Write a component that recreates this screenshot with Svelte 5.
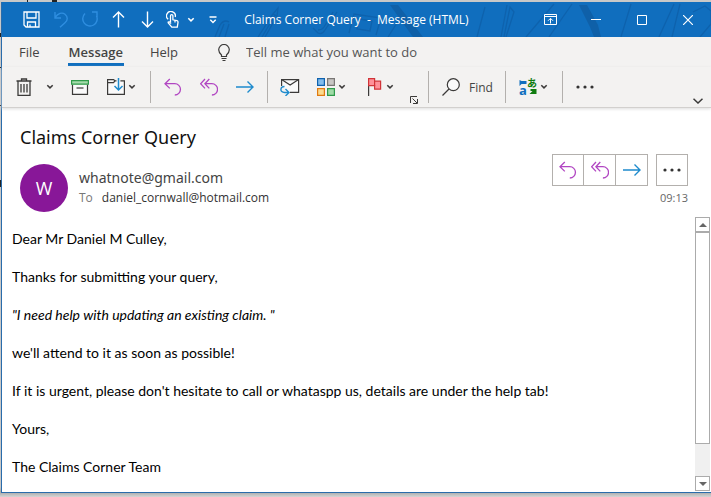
<script>
  let tell = $state('');
  const paragraphs = [
    { text: 'Dear Mr Daniel M Culley,' },
    { text: 'Thanks for submitting your query,' },
    { text: '"I need help with updating an existing claim. "', quote: true },
    { text: "we'll attend to it as soon as possible!" },
    { text: "If it is urgent, please don't hesitate to call or whataspp us, details are under the help tab!" },
    { text: 'Yours,' },
    { text: 'The Claims Corner Team' }
  ];
</script>

{#snippet chev()}
  <svg class="chev" width="8" height="6" viewBox="0 0 8 6"><path d="M1.3 1.2 4 3.9l2.700-2.700" stroke-width="1.500" /></svg>
{/snippet}
{#snippet reply()}
  <svg class="purple" width="18" height="18" viewBox="0 0 18 18"><path d="M5.800 1 1 5.700l4.800 4.700M1 5.700h9.800a5.500 5.500 0 0 1 0 11.300" /></svg>
{/snippet}
{#snippet replyAll()}
  <svg class="purple" width="18" height="18" viewBox="0 0 18 18"><path d="M5 1 .6 5.700 5 10.400M9.300 1 4.900 5.700l4.400 4.700M4.900 5.700h7a5.500 5.500 0 0 1 0 11.300" /></svg>
{/snippet}
{#snippet forward()}
  <svg class="azure" width="18" height="18" viewBox="0 0 18 18"><path d="M0 9h17M11.500 3.500 17 9l-5.500 5.500" /></svg>
{/snippet}
{#snippet dots()}
  <svg width="18" height="4" viewBox="0 0 18 4"><g fill="#333" stroke="none"><circle cx="2" cy="2" r="1.600" /><circle cx="9" cy="2" r="1.600" /><circle cx="16" cy="2" r="1.600" /></g></svg>
{/snippet}

<div class="desktop">
  <main class="window">
    <header class="titlebar">
      <svg class="art" width="560" height="35" viewBox="0 0 560 35">
        <g class="lines">
          <path d="M64 35l5-12q4-6 9-3M68 35l5-13M74 35l4-13" />
          <path d="M107 35l15-23 5-6-1 8-12 21M111 35l13-22M122 12l4 2" />
          <path d="M162 26l5 5q4 2 7-3l12-18M167 28q4 0 6-3l9-15M198 31l5-19 27 4-5 17M208 17l13 2-2 10-13-2zM237 35l14-22M250 12l18 23" />
          <path d="M326 35l8-30M350 35l6-32M353 35l6-30 4 5-8 25M375 35l28-33M398 35l23-33M470 35l10-33M508 35l15-33M521 35l8-33M542 10l12-6 6 5v13l-11 13" />
        </g>
        <path class="solid" d="M239 3h8l25 32h-10zM428 3h8l11 20 3 12h-7l-4-10z" />
      </svg>
      <nav class="quick" aria-label="Quick access">
        <button aria-label="Save" class="q">
          <svg width="17" height="17" viewBox="0 0 17 17"><path d="M1 1h15v15H3l-2-2zM4 1v6h9V1M4.500 16v-5h8v5M7 13.500V16" stroke-width="1.300" /></svg>
        </button>
        <button aria-label="Undo" class="q dim">
          <svg width="16" height="17" viewBox="0 0 16 17"><path d="M2 1v6h6M2 6.500C5 2.500 9 .8 12 3.300s3 6 0 8.500l-5 4.500" stroke-width="1.400" /></svg>
        </button>
        <button aria-label="Redo" class="q dim">
          <svg width="17" height="17" viewBox="0 0 17 17"><path d="M11 1h5v5M15.500 4.800A7.200 7.200 0 1 1 4 2.600" stroke-width="1.400" /></svg>
        </button>
        <button aria-label="Previous item" class="q">
          <svg width="13" height="17" viewBox="0 0 13 17"><path d="M6.500 16.500V1M1 6.500 6.500 1 12 6.500" stroke-width="1.400" /></svg>
        </button>
        <button aria-label="Next item" class="q">
          <svg width="13" height="17" viewBox="0 0 13 17"><path d="M6.500.5V16M1 10.500 6.500 16l5.500-5.500" stroke-width="1.400" /></svg>
        </button>
        <button aria-label="Touch mode" class="touch">
          <svg width="13" height="17" viewBox="0 0 13 17"><path d="M2.200 8.300A4.400 4.400 0 1 1 9.200 6M4.500 11V4.800a1.200 1.200 0 0 1 2.400 0v4l4.100.8q1.200.4 1 1.800l-.7 4.800H5.800L2.300 12q-.5-1.400 1-1.200l1.800 1.600M9 9.500v2" stroke-width="1.300" /></svg>
          {@render chev()}
        </button>
        <button aria-label="Customize toolbar" class="q">
          <svg width="8" height="8" viewBox="0 0 8 8"><path d="M.5 1h7M1.300 3.800 4 6.500l2.700-2.700" stroke-width="1.400" /></svg>
        </button>
      </nav>
      <div class="caption">Claims Corner Query&nbsp; -&nbsp; Message (HTML)</div>
      <div class="controls">
        <button aria-label="Ribbon display options">
          <svg width="13" height="11" viewBox="0 0 13 11"><path d="M.5.5h12v10H.5zM.5 2.500h12M6.500 9.500V4.500M4 6.800l2.500-2.500L9 6.800" /></svg>
        </button>
        <button aria-label="Minimize"><svg width="10" height="10" viewBox="0 0 10 10"><path d="M0 4.500h10" /></svg></button>
        <button aria-label="Maximize"><svg width="10" height="10" viewBox="0 0 10 10"><path d="M.5.5h9v9h-9z" /></svg></button>
        <button aria-label="Close"><svg width="10" height="10" viewBox="0 0 10 10"><path d="M0 0l10 10M10 0 0 10" stroke-width="1.200" /></svg></button>
      </div>
    </header>

    <nav class="tabs" aria-label="Ribbon tabs">
      <button>File</button>
      <button class="active">Message</button>
      <button>Help</button>
      <label for="tell" aria-label="Tell me what you want to do">
        <svg width="12" height="17" viewBox="0 0 12 17"><path d="M3.500 12.500V11Q.7 8.500.7 5.800a5.300 5.300 0 0 1 10.600 0Q11.300 8.500 8.500 11v1.500zM3.500 14.500h5M4.500 16.500h3" stroke-width="1.200" /></svg>
      </label>
      <input id="tell" type="text" placeholder="Tell me what you want to do" bind:value={tell} />
    </nav>

    <div class="ribbon" role="toolbar" aria-label="Message">
      <button class="tool" aria-label="Delete">
        <svg width="16" height="18" viewBox="0 0 16 18"><path d="M.5 3h15M5.500 2.500V1h5v1.500M2 3v14.300h12V3M5 6v8.500M8 6v8.500M11 6v8.500" stroke-width="1.300" /></svg>
      </button>
      <button class="more" aria-label="Delete options">{@render chev()}</button>
      <button class="tool" aria-label="Archive">
        <svg width="18" height="15" viewBox="0 0 18 15"><path d="M1.500 4.500v9.800h15V4.500" fill="#fafafa" stroke-width="1.200" /><path d="M.6.6h16.800v3.600H.6z" fill="#a5dbab" stroke="#2f9a4a" stroke-width="1.200" /><path d="M5.500 8h7" stroke-width="1.200" /></svg>
      </button>
      <button class="combo" aria-label="Move">
        <svg width="18" height="18" viewBox="0 0 18 18"><path d="M8 2.800 6.500 1.600H.6v14.800h16.800V2.800h-4M.6 4.700h5.900L8 2.800h1.500" fill="#fafafa" stroke-width="1.200" /><path d="M11.500 0v12M7.500 8l4 4 4-4" stroke="#1e8bcd" stroke-width="1.500" /></svg>
        {@render chev()}
      </button>
      <span class="sep"></span>
      <button class="tool" aria-label="Reply">{@render reply()}</button>
      <button class="tool" aria-label="Reply all">{@render replyAll()}</button>
      <button class="tool" aria-label="Forward">{@render forward()}</button>
      <span class="sep"></span>
      <button class="tool" aria-label="Move to inbox">
        <svg width="20" height="18" viewBox="0 0 20 18"><path d="M1.600 8V1.600h17v12.800H10" fill="#fafafa" stroke-width="1.200" /><path d="M1.600 1.600l8.500 5.500 8.500-5.500" stroke-width="1.200" /><path d="M4.500 8.500C0 8.500-.5 14.500 4.500 14.500h4M5.500 11l3.500 3.500L5.500 18" stroke="#1e8bcd" stroke-width="1.400" /></svg>
      </button>
      <button class="combo" aria-label="Categorize">
        <svg width="18" height="18" viewBox="0 0 18 18"><g stroke-width="1.200"><path d="M.6.6h6.800v6.800H.6z" fill="#83bdec" stroke="#0f62ae" /><path d="M10.600.6h6.800v6.800h-6.800z" fill="#c8c6c4" stroke="#797775" /><path d="M.6 10.600h6.800v6.800H.6z" fill="#fbdb8f" stroke="#e07a10" /><path d="M10.600 10.600h6.800v6.800h-6.800z" fill="#a0dba7" stroke="#2f9a4a" /></g></svg>
        {@render chev()}
      </button>
      <button class="combo" aria-label="Follow up">
        <svg width="18" height="18" viewBox="0 0 18 18"><path d="M3.600 8v10" stroke-width="1.200" /><path d="M3.600.6h6v2.600h6v8h-6V7.700h-6z" fill="#ff9199" stroke="#d13438" stroke-width="1.200" /><path d="M9.600 3v5" stroke="#d13438" stroke-width="1.200" /></svg>
        {@render chev()}
      </button>
      <button class="launcher" aria-label="Tag options">
        <svg width="8" height="8" viewBox="0 0 8 8"><path d="M.5 7V.5H7M2.500 2.500 7 7M7.500 3v4.500H3" /></svg>
      </button>
      <span class="sep"></span>
      <button class="find">
        <svg width="18" height="18" viewBox="0 0 18 18"><circle cx="11.300" cy="6.700" r="6" fill="#fafafa" stroke-width="1.200" /><path d="M7 11 .5 17.500" stroke-width="1.300" /></svg>
        Find
      </button>
      <span class="sep"></span>
      <button class="combo" aria-label="Translate">
        <span class="translate"><b>a</b><i lang="ja">あ</i>
          <svg width="18" height="18" viewBox="0 0 18 18"><path d="M.5 2v6l2-2h5V3h-5z" fill="#106ebe" stroke="none" /><path d="M17.500 16v-5h-6v2h2l-3 3z" fill="#107c10" stroke="none" /></svg>
        </span>
        {@render chev()}
      </button>
      <span class="sep"></span>
      <button class="tool" aria-label="More commands">{@render dots()}</button>
      <button class="collapse" aria-label="Collapse ribbon">
        <svg width="10" height="6" viewBox="0 0 10 6"><path d="M.5.7 5 5 9.500.7" stroke-width="1.500" /></svg>
      </button>
    </div>

    <section class="head">
      <h1>Claims Corner Query</h1>
      <div class="sender">
        <div class="avatar">W</div>
        <div class="people">
          <div class="from">whatnote@gmail.com</div>
          <div class="to"><span>To</span>daniel_cornwall@hotmail.com</div>
        </div>
        <div class="side">
          <div class="actions">
            <div class="group">
              <button aria-label="Reply">{@render reply()}</button>
              <button aria-label="Reply all">{@render replyAll()}</button>
              <button aria-label="Forward">{@render forward()}</button>
            </div>
            <button aria-label="More actions">{@render dots()}</button>
          </div>
          <time>09:13</time>
        </div>
      </div>
    </section>

    <section class="message">
      <article>
        {#each paragraphs as p}
          <p class:quote={p.quote}>{p.text}</p>
        {/each}
      </article>
      <div class="scroll">
        <button aria-label="Scroll up"><svg width="8" height="4" viewBox="0 0 8 4"><path d="M0 4 4 0l4 4z" fill="#666" stroke="none" /></svg></button>
        <div class="track"><div class="thumb"></div></div>
        <button aria-label="Scroll down"><svg width="8" height="4" viewBox="0 0 8 4"><path d="M0 0l4 4 4-4z" fill="#666" stroke="none" /></svg></button>
      </div>
    </section>
  </main>
</div>

<style>
  :global(body) { margin: 0; }
  .desktop {
    box-sizing: border-box;
    min-height: 100vh;
    padding: 2px 0 4px 1px;
    display: flex;
    background:
      linear-gradient(#222, #222) 27px 0 / 1px 2px no-repeat,
      linear-gradient(#222, #222) 52px 0 / 5px 2px no-repeat,
      linear-gradient(#222, #222) 0 33px / 1px 4px no-repeat,
      linear-gradient(#222, #222) 0 67px / 1px 1px no-repeat,
      linear-gradient(#222, #222) 0 105px / 1px 1px no-repeat,
      linear-gradient(#222, #222) 0 180px / 1px 7px no-repeat,
      linear-gradient(#c8c8c8, #c8c8c8 98%, #a8a8a8 99%, #d4d4d4);
    font-family: "Open Sans", "Noto Sans", sans-serif;
    color: #444;
  }
  .window {
    flex: 1;
    min-width: 0;
    display: flex;
    flex-direction: column;
    background: #fff;
    border: 1px solid #2a6cab;
    border-top: 0;
    border-right: 0;
  }
  button {
    margin: 0;
    padding: 0;
    border: 0;
    background: none;
    font: inherit;
    color: inherit;
    display: flex;
    align-items: center;
    justify-content: center;
  }
  svg { flex: none; fill: none; stroke: #3b3a39; }
  .purple { stroke: #b146c2; stroke-width: 1.3px; }
  .azure { stroke: #1e8bcd; stroke-width: 1.4px; }

  .titlebar {
    position: relative;
    height: 35px;
    display: grid;
    grid-template-columns: 1fr auto 1fr;
    align-items: center;
    background: #106ebe;
    color: #fff;
    font-size: 12px;
    overflow: hidden;
  }
  .titlebar svg { stroke: #fff; }
  .titlebar .art { position: absolute; right: 0; top: 0; width: 560px; }
  .lines { stroke: #0e62ad; stroke-width: 1.3px; }
  .solid { fill: #0f60a8; stroke: none; }
  .quick, .controls, .caption { position: relative; }
  .quick { display: flex; padding-left: 15px; }
  .quick button { height: 35px; }
  .q { width: 29px; }
  .titlebar .dim svg { stroke: #2f8ee0; }
  .touch { width: 36px; gap: 8px; }
  .caption { white-space: nowrap; }
  .controls { display: flex; justify-content: flex-end; }
  .controls button { width: 46px; height: 35px; }

  .tabs {
    display: flex;
    height: 30px;
    align-items: center;
    padding-left: 17px;
    background: #f3f2f1;
    font-size: 13px;
  }
  .tabs button { height: 30px; margin-right: 28px; }
  .tabs .active { font-weight: 600; margin-right: 26px; padding: 0 1px; box-shadow: inset 0 -3px #106ebe; height: 28px; }
  .tabs label { display: flex; margin: 0 16px 0 12px; }
  .tabs input {
    flex: 1;
    min-width: 0;
    padding: 0;
    border: 0;
    outline: 0;
    background: none;
    font: inherit;
    color: #555;
  }
  .tabs input::placeholder { color: #555; opacity: 1; }

  .ribbon {
    display: flex;
    align-items: center;
    height: 40px;
    padding-left: 4px;
    background: #f3f2f1;
    border-bottom: 1px solid #d2d0ce;
    box-shadow: 0 1px 3px #ddd;
    font-size: 12px;
  }
  .ribbon button { height: 32px; }
  .tool { width: 36px; }
  .more { width: 20px; padding-right: 4px; }
  .combo { gap: 3px; padding: 0 10px 0 9px; }
  .ribbon .launcher { width: 20px; height: 40px; padding-top: 26px; box-sizing: border-box; }
  .find { gap: 9px; padding: 0 8px 0 9px; }
  .sep { width: 1px; height: 32px; margin: 0 4px; background: #b3b0ad; }
  .collapse { margin-left: auto; width: 26px; padding-top: 28px; box-sizing: border-box; }
  .translate { position: relative; width: 18px; height: 18px; }
  .translate svg { position: absolute; inset: 0; }
  .translate b { position: absolute; left: 0; bottom: 0; font: 700 13px/12px "Open Sans", sans-serif; color: #106ebe; }
  .translate i { position: absolute; right: 0; top: 0; font: 700 10px/10px "Noto Sans CJK JP", sans-serif; color: #107c10; }

  .head { padding: 17px 23px 5px 18px; }
  h1 { margin: 0 0 5px; font-family: "Noto Sans", sans-serif; font-size: 18px; line-height: 24px; font-weight: 400; color: #111; }
  .sender { display: flex; align-items: flex-start; }
  .avatar {
    width: 48px;
    height: 48px;
    margin-top: 10px;
    border-radius: 50%;
    background: #881798;
    color: #fff;
    font-size: 18px;
    line-height: 48px;
    text-align: center;
  }
  .people { flex: 1; min-width: 0; padding: 14px 0 0 11px; }
  .from { font-family: "Noto Sans", sans-serif; font-size: 14px; line-height: 20px; }
  .to { font-size: 12px; line-height: 20px; color: #333; }
  .to span { margin-right: 9px; color: #777; }
  .side { text-align: right; }
  .actions { display: flex; gap: 8px; }
  .actions button { box-sizing: border-box; width: 32px; height: 32px; border: 1px solid #b3b0ad; }
  .group { display: flex; }
  .group button + button { border-left: 0; }
  time { display: block; font-size: 11px; line-height: 24px; color: #666; }

  .message { flex: 1; display: flex; }
  article {
    flex: 1;
    padding: 13px 10px;
    font-family: Lato, "Open Sans", sans-serif;
    font-size: 14px;
    line-height: 18px;
    color: #000;
  }
  p { margin: 0 0 20px; }
  p:last-child { margin: 0; }
  .quote { font-style: italic; }
  .scroll { display: flex; flex-direction: column; width: 15px; margin: 0 1px 1px 0; background: #f0f0f0; }
  .scroll button { box-sizing: border-box; height: 15px; border: 1px solid #ababab; background: #fff; }
  .track { flex: 1; }
  .thumb { box-sizing: border-box; height: 87%; border: 1px solid #ababab; background: #fff; }
</style>
